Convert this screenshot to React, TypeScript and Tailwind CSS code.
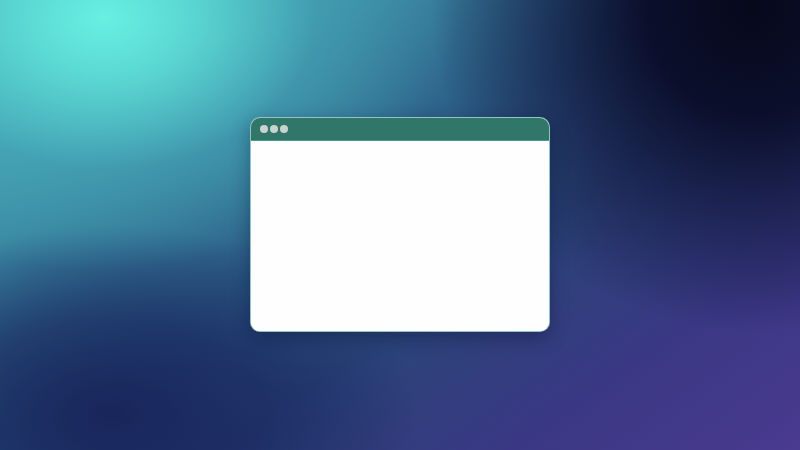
export default function App() {
  return (
    <div className="relative flex h-[450px] w-[800px] items-start justify-center overflow-hidden bg-[linear-gradient(145deg,#4ab8bf_0%,#3a86a2_25%,#2b5a84_45%,#2a4478_60%,#3a3884_80%,#4a3a90_100%)] pt-[117px]">
      {/* backdrop glow layers */}
      <div className="pointer-events-none absolute inset-0 bg-[radial-gradient(ellipse_40%_72%_at_94%_2%,#07081b_0%,#0b0f2c_33%,rgba(18,22,62,0.55)_68%,transparent_100%)]" />
      <div className="pointer-events-none absolute inset-0 bg-[radial-gradient(ellipse_38%_42%_at_14%_92%,#18255b_0%,rgba(24,36,92,0.65)_50%,transparent_100%)]" />
      <div className="pointer-events-none absolute inset-0 bg-[radial-gradient(ellipse_44%_56%_at_13%_4%,#68f0e2_0%,#5ad6d2_25%,rgba(70,170,185,0.55)_60%,transparent_100%)]" />

      <div className="relative flex h-[215px] w-[300px] flex-col overflow-hidden rounded-[10px] border border-[#4c9c96]/60 bg-white shadow-[0_6px_18px_rgba(10,15,45,0.35)]">
        <div className="flex h-[23px] items-center gap-[2px] border-b border-[#4a958c] bg-[#30776a] pl-[9px]">
          <span className="h-[8px] w-[8px] rounded-full bg-[#c9d3d0]" />
          <span className="h-[8px] w-[8px] rounded-full bg-[#c9d3d0]" />
          <span className="h-[8px] w-[8px] rounded-full bg-[#c9d3d0]" />
        </div>
        <div className="flex-1 bg-[#fefefe]" />
      </div>
    </div>
  );
}
